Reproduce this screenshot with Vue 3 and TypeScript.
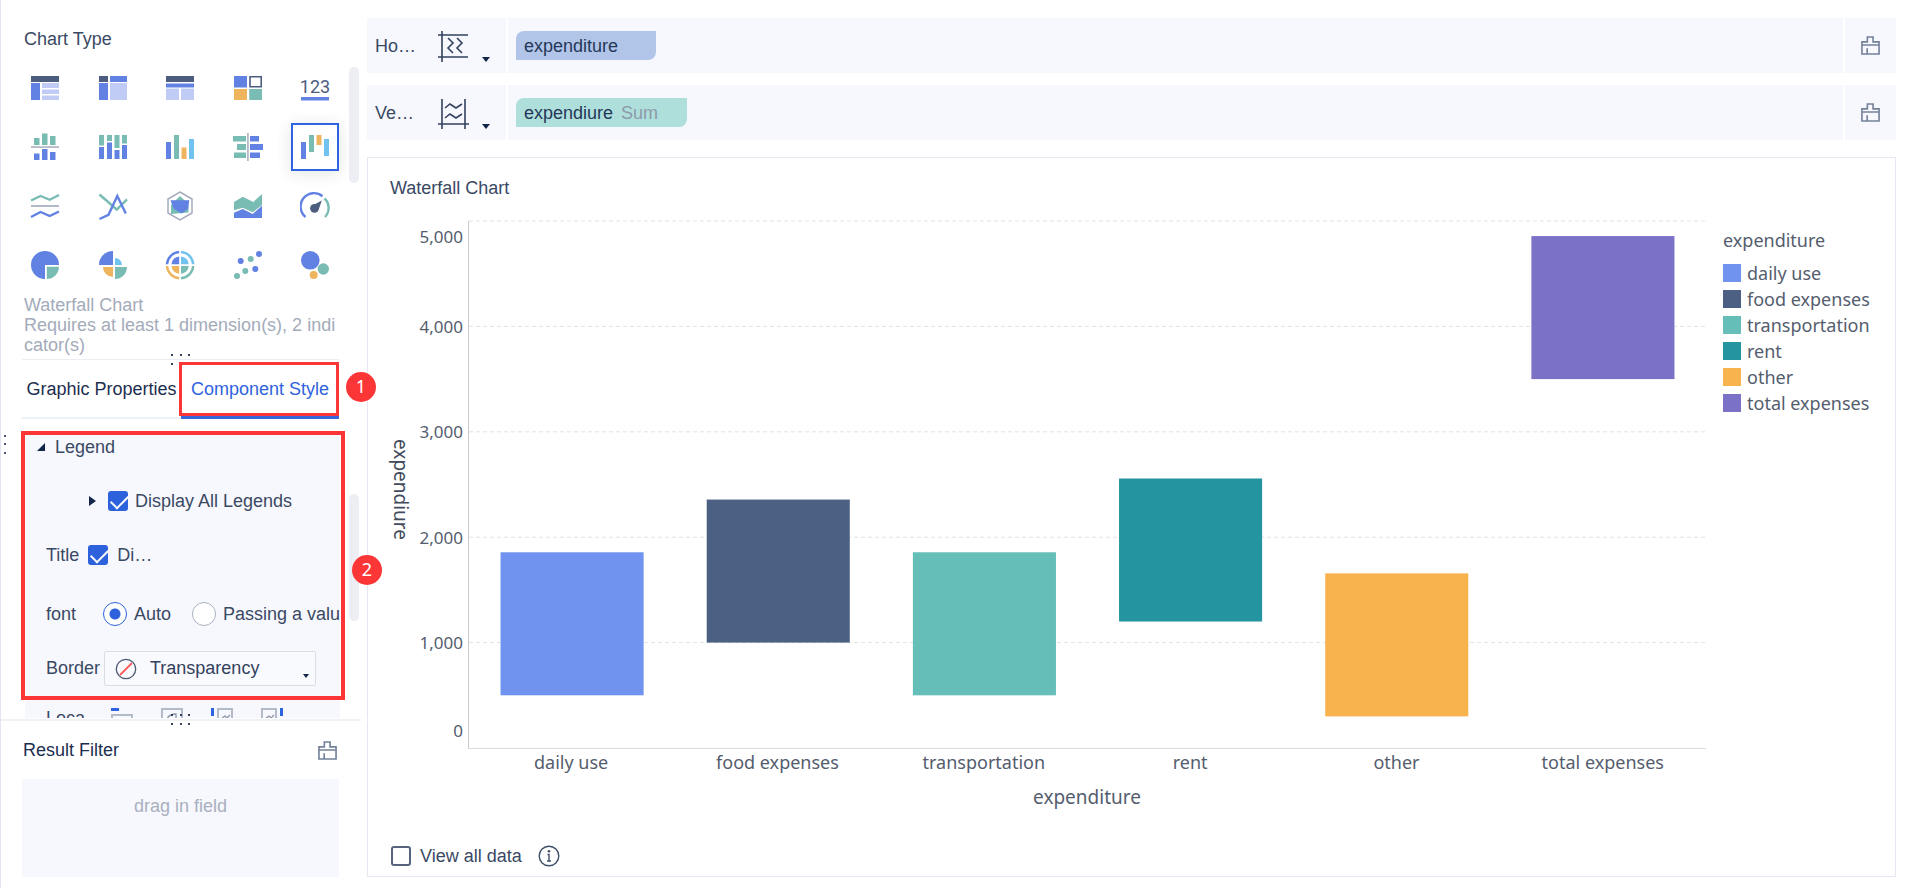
<script setup lang="ts">
import { ref } from 'vue'

interface Entry {
  name: string
  low: number
  high: number
  color: string
}

const axisMax = 5000
const ticks: string[] = ['5,000', '4,000', '3,000', '2,000', '1,000', '0']

const entries: Entry[] = [
  { name: 'daily use', low: 500, high: 1857, color: '#6f93ee' },
  { name: 'food expenses', low: 1000, high: 2357, color: '#4c6084' },
  { name: 'transportation', low: 500, high: 1857, color: '#65beb7' },
  { name: 'rent', low: 1200, high: 2557, color: '#2494a1' },
  { name: 'other', low: 300, high: 1657, color: '#f9b34e' },
  { name: 'total expenses', low: 3500, high: 4857, color: '#7b72c8' },
]

const slot = 100 / entries.length
const barShare = 0.694

const barX = (i: number): string => `${(i + (1 - barShare) / 2) * slot}%`
const barWidth = `${slot * barShare}%`
const barY = (e: Entry): string => `${100 - (e.high / axisMax) * 100}%`
const barHeight = (e: Entry): string => `${((e.high - e.low) / axisMax) * 100}%`

const chartTypes: string[] = [
  'Grouped table', 'Cross table', 'Detail table', 'Color table', 'KPI card',
  'Contrast column', 'Partition column', 'Column', 'Bidirectional bar', 'Waterfall',
  'Multi line', 'Range line', 'Radar', 'Area', 'Gauge',
  'Pie', 'Rose', 'Multi-layer pie', 'Scatter', 'Bubble',
]
const selectedType = ref(9)

const displayLegends = ref(true)
const displayTitle = ref(true)
const fontMode = ref('auto')
const viewAll = ref(false)
</script>

<template>
  <div class="page">
    <aside class="side">
      <section class="types">
        <h2 class="heading">Chart Type</h2>
        <div class="type-grid">
          <button
            v-for="(t, i) in chartTypes"
            :key="t"
            type="button"
            class="type"
            :class="{ selected: selectedType === i }"
            :aria-label="t"
            @click="selectedType = i"
          >
            <svg width="30" height="30" viewBox="0 0 30 30">
              <template v-if="i === 0">
                <path class="f-dark" d="M1 3h28v6H1z" />
                <path class="f-blue" d="M1 10h9v17H1z" />
                <path class="f-pale" d="M12 10h17v5H12zM12 16.500h17v4.500H12zM12 22.500h17V27H12z" />
              </template>
              <template v-else-if="i === 1">
                <path class="f-dark" d="M1 3h9v6H1z" />
                <path class="f-blue" d="M12 3h17v6H12zM1 10h9v17H1z" />
                <path class="f-pale" d="M12 10h17v17H12z" />
              </template>
              <template v-else-if="i === 2">
                <path class="f-dark" d="M1 3h28v6H1z" />
                <path class="f-blue" d="M1 10.500h28v4H1z" />
                <path class="f-pale" d="M1 15.500h13V27H1zM16 15.500h13V27H16z" />
              </template>
              <template v-else-if="i === 3">
                <path class="f-blue" d="M1 3h13v11.500H1z" />
                <path class="s-dark" stroke-width="1.600" d="M17 3.800h11.200v10H17z" />
                <path class="f-orange" d="M1 16h13v11H1z" />
                <path class="f-green" d="M16.200 16H29v11H16.200z" />
              </template>
              <template v-else-if="i === 4">
                <text class="digits" x="15" y="20" text-anchor="middle">123</text>
                <path class="f-blue" d="M1 24h28v3.500H1z" />
              </template>
              <template v-else-if="i === 5">
                <path class="f-gray" d="M1 14.200h28v1.800H1z" />
                <path class="f-green" d="M4 6h5.500v7H4zM12 1.500h5.500V13H12zM20 4h5.500v9H20z" />
                <path class="f-blue" d="M4 21.500h5.500V28H4zM12 17h5.500v11H12zM20 20h5.500v8H20z" />
              </template>
              <template v-else-if="i === 6">
                <path class="f-green" d="M1 3h5v10.500H1zM9 3h5v6H9zM16.500 3h5v13h-5zM24 3h5v8.500h-5z" />
                <path class="f-blue" d="M1 15h5v12H1zM9 10.500h5V27H9zM16.500 18h5v9h-5zM24 13h5v14h-5z" />
              </template>
              <template v-else-if="i === 7">
                <path class="f-blue" d="M1 10h5v17H1z" />
                <path class="f-green" d="M9 3h5v24H9z" />
                <path class="f-orange" d="M16.500 15.500h5V27h-5z" />
                <path class="f-sky" d="M24 7h5v20h-5z" />
              </template>
              <template v-else-if="i === 8">
                <path class="f-green" d="M0 4h13v5.500H0zM4 12h9v6H4zM1 20.500h12V26H1z" />
                <path class="f-blue" d="M17 4h9v5.500h-9zM17 12h13v6H17zM17 20.500h10V26H17z" />
                <path class="f-gray" d="M14 1h1.800v28H14z" />
              </template>
              <template v-else-if="i === 9">
                <path class="f-blue" d="M1 10h5v17H1z" />
                <path class="f-green" d="M9 3h5v17H9z" />
                <path class="f-orange" d="M16.500 3h5v10h-5z" />
                <path class="f-sky" d="M24 7h5v17h-5z" />
              </template>
              <template v-else-if="i === 10">
                <path class="s-green" d="M1 9.500l9.500-4.500 9.200 3.800L29 4" />
                <path class="f-gray" d="M1 14h28v2H1z" />
                <path class="s-blue" d="M1 26l9.500-5 9.200 4L29 20.500" />
              </template>
              <template v-else-if="i === 11">
                <path class="s-green" d="M1.500 3.500l17.200 15L29 8.300" />
                <path class="s-blue" d="M1.500 28l9-4.200L19.300 5l8.500 17.500" />
              </template>
              <template v-else-if="i === 12">
                <path class="s-gray" d="M15 1l12 7v14l-12 7-12-7V8z" />
                <path class="f-green" d="M15 5l8.500 8v8.500L6 23V14z" />
                <path class="f-blue" d="M5.500 9.200h18.800L23 18l-6.500 4.500-8-5z" />
              </template>
              <template v-else-if="i === 13">
                <path class="f-green" d="M1 11l8.700-5.300L20.300 11 29 3v11l-9.300 7.300-10-4.600L1 19.300z" />
                <path class="f-blue" d="M1 21.700L9.700 18l10 5L29 14.700V27H1z" />
              </template>
              <template v-else-if="i === 14">
                <path class="s-blue" d="M5.500 26A13 13 0 0 1 22.500 5.200" />
                <path class="s-green" d="M24.500 7.500A13 13 0 0 1 25 26" />
                <circle class="f-dark" cx="14.500" cy="17.300" r="4.400" />
                <path class="f-dark" d="M21.800 9.500l-3.200 9.300-6-4.200z" />
              </template>
              <template v-else-if="i === 15">
                <path class="f-blue" d="M15 15V29A14 14 0 1 1 29 15z" />
                <path class="f-green" d="M16.800 16.800H29A12.300 12.300 0 0 1 16.800 29z" />
              </template>
              <template v-else-if="i === 16">
                <path class="f-blue" d="M15 15H1A14 14 0 0 1 15 1z" />
                <path class="f-sky" d="M17 15V8a7 7 0 0 1 7 7z" />
                <path class="f-orange" d="M15 17v10a10 10 0 0 1-10-10z" />
                <path class="f-green" d="M17 17h12a12 12 0 0 1-12 12z" />
              </template>
              <template v-else-if="i === 17">
                <path class="f-blue" d="M14.200 14.200H6.500a8 8 0 0 1 7.700-7.700z" />
                <path class="f-sky" d="M16 14.200V6.500a8 8 0 0 1 7.700 7.700z" />
                <path class="f-orange" d="M14.200 16v7.700A8 8 0 0 1 6.500 16z" />
                <path class="f-green" d="M16 16h7.700a8 8 0 0 1-7.700 7.700z" />
                <path class="s-blue" d="M2 14.200A13 13 0 0 1 14.200 2" />
                <path class="s-sky" d="M16 2a13 13 0 0 1 12.200 12.200" />
                <path class="s-orange" d="M2 16a13 13 0 0 0 12.200 12.200" />
                <path class="s-green" d="M28.200 16A13 13 0 0 1 16 28.200" />
              </template>
              <template v-else-if="i === 18">
                <g class="f-blue">
                  <circle cx="26" cy="4" r="3" /><circle cx="7.700" cy="11" r="3" /><circle cx="22.300" cy="19" r="3" />
                </g>
                <g class="f-green">
                  <circle cx="17.700" cy="9" r="3" /><circle cx="12.300" cy="21" r="3" /><circle cx="4" cy="26" r="3" />
                </g>
              </template>
              <template v-else>
                <circle class="f-blue" cx="10.300" cy="10.300" r="9.300" />
                <circle class="f-green" cx="23.300" cy="19" r="5.700" />
                <circle class="f-orange" cx="13.700" cy="25" r="4" />
              </template>
            </svg>
          </button>
        </div>
        <p class="hint">Waterfall Chart<br />Requires at least 1 dimension(s), 2 indicator(s)</p>
        <span class="thumb thumb-types"></span>
      </section>

      <nav class="tabs">
        <svg class="grip" width="20" height="12" viewBox="0 0 20 12">
          <path d="M0 0h2v2H0zM9 0h2v2H9zM17 0h2v2h-2zM0 9h2v2H0z" />
        </svg>
        <button type="button" class="tab">Graphic Properties</button>
        <button type="button" class="tab active">Component Style</button>
        <span class="mark mark-tab"></span>
        <span class="badge badge-one">1</span>
      </nav>

      <section class="style-wrap">
        <div class="style-pane">
          <div class="row group">
            <svg width="9" height="9" viewBox="0 0 9 9"><path class="f-ink" d="M8 0v8H0z" /></svg>
            <span>Legend</span>
          </div>
          <div class="row all">
            <svg width="7" height="12" viewBox="0 0 7 12"><path class="f-ink" d="M0 1l7 5-7 5z" /></svg>
            <label class="choice"><input v-model="displayLegends" type="checkbox" class="check" />Display All Legends</label>
          </div>
          <div class="row title-row">
            <span>Title</span>
            <label class="choice wide"><input v-model="displayTitle" type="checkbox" class="check" />Di…</label>
          </div>
          <div class="row font-row">
            <span class="key">font</span>
            <label class="choice"><input v-model="fontMode" type="radio" name="font" value="auto" class="radio" />Auto</label>
            <label class="choice"><input v-model="fontMode" type="radio" name="font" value="value" class="radio" />Passing a value</label>
          </div>
          <div class="row border-row">
            <label class="key" for="border">Border</label>
            <span class="select-box">
              <svg class="none-icon" width="22" height="22" viewBox="0 0 22 22">
                <path d="M5 17L17 5" stroke="#fb5a57" stroke-width="1.800" />
                <circle cx="11" cy="11" r="9.700" fill="none" stroke="#4b5973" stroke-width="1.300" />
              </svg>
              <select id="border">
                <option>Transparency</option>
              </select>
              <svg class="select-caret" width="6" height="4" viewBox="0 0 6 4"><path class="f-ink" d="M0 0h6L3 4z" /></svg>
            </span>
          </div>
          <div class="row loca-row">
            <span class="key">Loca</span>
            <svg width="22" height="22" viewBox="0 0 22 22">
              <path class="f-royal" d="M0 0h8v3H0z" /><path class="s-box" d="M1 21V7h20v14M10 13l2-2h6" />
            </svg>
            <svg width="22" height="22" viewBox="0 0 22 22">
              <path class="s-box" d="M1 21V1h20v20z" /><path class="s-mini" d="M6 11q2-5 9-5v6" />
            </svg>
            <svg width="22" height="22" viewBox="0 0 22 22">
              <path class="f-royal" d="M0 0h3v8H0z" /><path class="s-box" d="M7 21V1h14v20z" /><path class="s-mini" d="M11 10l3-2 2 2 3-3" />
            </svg>
            <svg width="22" height="22" viewBox="0 0 22 22">
              <path class="s-box" d="M1 21V1h14v20z" /><path class="s-mini" d="M5 10l3-2 2 2 3-3" /><path class="f-royal" d="M19 0h3v8h-3z" />
            </svg>
          </div>
        </div>
        <span class="thumb thumb-style"></span>
        <span class="mark mark-style"></span>
        <span class="badge badge-two">2</span>
        <svg class="side-grip" width="2" height="19" viewBox="0 0 2 19"><path d="M0 0h2v2H0zM0 8h2v2H0zM0 17h2v2H0z" /></svg>
      </section>

      <section class="filter">
        <svg class="grip" width="20" height="12" viewBox="0 0 20 12">
          <path d="M0 0h2v2H0zM9 0h2v2H9zM17 0h2v2h-2zM0 9h2v2H0zM9 9h2v2H9zM17 9h2v2h-2z" />
        </svg>
        <div class="filter-head">
          <h2 class="heading">Result Filter</h2>
          <button type="button" aria-label="Clear filter">
            <svg class="brush" width="19" height="19" viewBox="0 0 20 20">
              <path d="M1 6.200h5.700V1h6v5.200H19V19H1zM1 9.500h18M6.500 19v-6" />
            </svg>
          </button>
        </div>
        <div class="drop">drag in field</div>
      </section>
    </aside>

    <main class="main">
      <section class="shelf">
        <div class="shelf-name">
          <span class="axis">Ho…</span>
          <button type="button" class="axis-button" aria-label="Horizontal axis">
            <svg width="31" height="32" viewBox="0 0 31 32">
              <path d="M4 1v31M0 5h30M0 27h30M10 8l5 5-5 5 5 5M19 8l5 5-5 5 5 5" />
            </svg>
            <svg class="caret" width="8" height="5" viewBox="0 0 8 5"><path class="f-ink" d="M0 0h8L4 5z" /></svg>
          </button>
        </div>
        <div class="shelf-fields"><span class="pill dimension">expenditure</span></div>
        <button type="button" class="shelf-clear" aria-label="Clear horizontal axis">
          <svg class="brush" width="19" height="19" viewBox="0 0 20 20">
            <path d="M1 6.200h5.700V1h6v5.200H19V19H1zM1 9.500h18M6.500 19v-6" />
          </svg>
        </button>
      </section>
      <section class="shelf">
        <div class="shelf-name">
          <span class="axis">Ve…</span>
          <button type="button" class="axis-button" aria-label="Vertical axis">
            <svg width="31" height="32" viewBox="0 0 31 32">
              <path d="M4 2v30M27 2v30M0 27h31M7 11l5-4 6 4 6-4M7 21l5-4 6 4 6-4" />
            </svg>
            <svg class="caret" width="8" height="5" viewBox="0 0 8 5"><path class="f-ink" d="M0 0h8L4 5z" /></svg>
          </button>
        </div>
        <div class="shelf-fields"><span class="pill measure">expendiure<em>Sum</em></span></div>
        <button type="button" class="shelf-clear" aria-label="Clear vertical axis">
          <svg class="brush" width="19" height="19" viewBox="0 0 20 20">
            <path d="M1 6.200h5.700V1h6v5.200H19V19H1zM1 9.500h18M6.500 19v-6" />
          </svg>
        </button>
      </section>

      <section class="card">
        <h1 class="card-title">Waterfall Chart</h1>
        <div class="chart">
          <div class="y-title">expendiure</div>
          <div class="y-ticks"><span v-for="t in ticks" :key="t">{{ t }}</span></div>
          <div class="plot">
            <svg width="100%" height="100%">
              <line v-for="n in 5" :key="n" class="grid" x1="0" x2="100%" :y1="`${(n - 1) * 20}%`" :y2="`${(n - 1) * 20}%`" />
              <rect
                v-for="(e, i) in entries"
                :key="e.name"
                :x="barX(i)"
                :y="barY(e)"
                :width="barWidth"
                :height="barHeight(e)"
                :fill="e.color"
              />
            </svg>
          </div>
          <div class="x-ticks"><span v-for="e in entries" :key="e.name">{{ e.name }}</span></div>
          <div class="x-title">expenditure</div>
          <div class="legend">
            <div>expenditure</div>
            <ul>
              <li v-for="e in entries" :key="e.name">
                <i :style="{ background: e.color }"></i>{{ e.name }}
              </li>
            </ul>
          </div>
        </div>
        <footer class="card-foot">
          <label class="choice"><input v-model="viewAll" type="checkbox" class="check" />View all data</label>
          <svg width="22" height="22" viewBox="0 0 22 22">
            <circle cx="11" cy="11" r="9.800" fill="none" stroke="#3f4e69" stroke-width="1.400" />
            <circle cx="11" cy="6.300" r="1.300" fill="#3f4e69" />
            <path d="M9.500 9.500H11V16M9 16h4" fill="none" stroke="#3f4e69" stroke-width="1.400" />
          </svg>
        </footer>
      </section>
    </main>
  </div>
</template>

<style>
body {
  margin: 0;
  background: #fff;
}
</style>

<style scoped>
.page {
  display: flex;
  min-height: 100vh;
  box-sizing: border-box;
  font: 18px/20px "Liberation Sans", Arial, sans-serif;
  color: #3a4964;
}
.page * {
  box-sizing: border-box;
}
button {
  padding: 0;
  border: 0;
  background: none;
  font: inherit;
  color: inherit;
  cursor: pointer;
}
svg {
  display: block;
  flex: none;
}
.side {
  display: flex;
  flex-direction: column;
  flex: none;
  width: 367px;
  border-left: 1px solid #e2e5f0;
}
.heading,
.card-title {
  margin: 0;
  font-size: 18px;
  font-weight: 400;
}

/* chart type picker */
.types {
  position: relative;
  padding: 29px 28px 4px 20px;
}
.types .heading {
  padding-left: 3px;
}
.type-grid {
  display: grid;
  grid-template-columns: repeat(5, 48px);
  justify-content: space-between;
  row-gap: 11px;
  margin-top: 15px;
}
.type {
  display: grid;
  place-items: center;
  height: 48px;
}
.type.selected {
  border: 2px solid #2f63df;
  background: #fff;
  box-shadow: 0 2px 16px rgba(20, 30, 60, 0.12);
}
.f-dark { fill: #4c5d80; }
.f-blue { fill: #6181e3; }
.f-pale { fill: #c0ccf5; }
.f-orange { fill: #eeb45e; }
.f-green { fill: #79bcb3; }
.f-sky { fill: #71c3ef; }
.f-gray { fill: #b3b9c7; }
.f-ink { fill: #12264a; }
.f-royal { fill: #2f63df; }
.s-dark, .s-blue, .s-green, .s-sky, .s-orange, .s-gray, .s-box, .s-mini { fill: none; }
.s-dark { stroke: #4c5d80; }
.s-blue { stroke: #6181e3; stroke-width: 2.4; }
.s-green { stroke: #79bcb3; stroke-width: 2.4; }
.s-sky { stroke: #71c3ef; stroke-width: 2.4; }
.s-orange { stroke: #eeb45e; stroke-width: 2.4; }
.s-gray { stroke: #a4acbc; stroke-width: 1.5; }
.s-box { stroke: #b3bac8; stroke-width: 2; }
.s-mini { stroke: #8d97a9; stroke-width: 1.3; }
.digits {
  font: 18px Roboto, sans-serif;
  fill: #4c5d80;
}
.hint {
  margin: 6px 0 0 3px;
  word-break: break-all;
  color: #a3abba;
}
.thumb {
  position: absolute;
  right: 8px;
  width: 10px;
  border-radius: 5px;
  background: #edeef3;
}
.thumb-types {
  top: 67px;
  height: 116px;
}
.thumb-style {
  top: 62px;
  height: 127px;
}

/* tabs */
.tabs {
  position: relative;
  display: flex;
  height: 60px;
  margin: 0 28px 0 21px;
  border-top: 1px solid #eceef3;
  border-bottom: 2px solid #ecf1f6;
}
.tab {
  width: 159px;
  margin-bottom: -2px;
  padding-bottom: 1px;
  white-space: nowrap;
  color: #1c2e50;
}
.tab.active {
  flex: 1;
  padding-bottom: 0;
  border-top: 2px solid transparent;
  border-bottom: 3px solid #3766dc;
  color: #3063dd;
}
.grip {
  position: absolute;
  top: -6px;
  left: 149px;
  fill: #33435f;
}
.mark {
  position: absolute;
  border: 3px solid #fc3636;
  pointer-events: none;
}
.mark-tab {
  inset: 2px 0 1px 157px;
}
.badge {
  position: absolute;
  width: 30px;
  height: 30px;
  border-radius: 50%;
  background: #fc3636;
  color: #fff;
  font: 18px/28px "Noto Sans", sans-serif;
  text-align: center;
}
.badge-one {
  top: 12px;
  right: -37px;
}

/* style settings */
.style-wrap {
  position: relative;
  display: flex;
  flex: 1 1 0;
  min-height: 286px;
  margin-top: 13px;
}
.style-pane {
  flex: 1 1 0;
  height: 286px;
  min-width: 0;
  margin: 0 27px 0 24px;
  overflow: hidden;
  background: #f7f8fd;
  white-space: nowrap;
}
.row {
  display: flex;
  align-items: center;
  padding-left: 21px;
}
.key,
.choice {
  flex: none;
}
.group {
  height: 30px;
  padding-left: 12px;
  gap: 9px;
}
.all {
  height: 78px;
  gap: 12px;
  padding-left: 64px;
}
.title-row {
  height: 30px;
  gap: 9px;
}
.font-row {
  height: 87px;
  gap: 21px;
}
.font-row .key {
  width: 36px;
}
.border-row {
  height: 22px;
}
.border-row .key {
  width: 58px;
}
.loca-row {
  align-items: flex-start;
  gap: 28px;
  padding-top: 29px;
}
.loca-row .key {
  width: 37px;
}
.choice {
  display: flex;
  align-items: center;
  gap: 7px;
}
.choice.wide {
  gap: 9px;
}
.check,
.radio {
  flex: none;
  appearance: none;
  margin: 0;
  background: #fff;
}
.check {
  width: 20px;
  height: 20px;
  border: 2px solid #57647c;
  border-radius: 3px;
}
.check:checked {
  border: 0;
  background: #2d62dc;
}
.check:checked::before {
  content: "";
  display: block;
  width: 15px;
  height: 8px;
  margin: 4px 0 0 3px;
  border: solid #fff;
  border-width: 0 0 2px 2px;
  transform: rotate(-45deg);
}
.radio {
  width: 24px;
  height: 24px;
  border: 1px solid #a8b0bf;
  border-radius: 50%;
}
.radio:checked {
  border-color: #2d62dc;
  background: radial-gradient(circle, #2d62dc 5px, #fff 6px);
}
.select-box {
  position: relative;
  display: block;
  width: 212px;
}
select {
  display: block;
  width: 100%;
  height: 35px;
  padding: 0 24px 0 45px;
  appearance: none;
  border: 1px solid #d9dde5;
  border-radius: 2px;
  background: #f9fafd;
  font: inherit;
  color: #33425e;
}
.none-icon {
  position: absolute;
  top: 7px;
  left: 11px;
}
.select-caret {
  position: absolute;
  right: 7px;
  bottom: 8px;
}
.mark-style {
  inset: -1px 22px 19px 20px;
  border-width: 4px;
}
.badge-two {
  top: 123px;
  right: -15px;
}
.side-grip {
  position: absolute;
  top: 3px;
  left: 3px;
  fill: #4a5872;
}

/* result filter */
.filter {
  position: relative;
  margin-right: 6px;
  padding: 19px 22px 11px 21px;
  border-top: 2px solid #eff1f6;
}
.filter .grip {
  top: -7px;
  left: 170px;
}
.filter-head {
  display: flex;
  align-items: center;
  justify-content: space-between;
  padding: 0 2px 0 1px;
  color: #1c2e50;
}
.drop {
  height: 98px;
  margin-top: 19px;
  padding-top: 17px;
  background: #f7f8fd;
  color: #a9b0bf;
  text-align: center;
}
.brush {
  fill: none;
  stroke: #74819a;
  stroke-width: 1.7;
}

/* shelves */
.main {
  display: flex;
  flex: 1;
  flex-direction: column;
  min-width: 0;
  padding: 18px 24px 11px 0;
}
.shelf {
  display: flex;
  gap: 2px;
  height: 55px;
  margin-bottom: 12px;
}
.shelf > * {
  background: #f7f8fd;
}
.shelf-name {
  display: flex;
  align-items: center;
  width: 139px;
  padding-left: 8px;
}
.axis {
  width: 63px;
}
.axis-button {
  display: flex;
  align-items: flex-end;
  gap: 13px;
  fill: none;
  stroke: #33425e;
  stroke-width: 1.6;
}
.caret {
  stroke: none;
}
.shelf-fields {
  flex: 1;
  padding: 13px 8px;
}
.pill {
  display: inline-flex;
  align-items: center;
  height: 29px;
  padding: 0 8px;
  border-radius: 8px 0;
  color: #253758;
}
.dimension {
  min-width: 140px;
  background: #b1c5e9;
}
.measure {
  min-width: 171px;
  gap: 8px;
  background: #aedfdb;
}
.pill em {
  font-style: normal;
  color: #8d9aaa;
}
.shelf-clear {
  display: grid;
  place-items: center;
  width: 51px;
}

/* chart */
.card {
  display: flex;
  flex: 1;
  flex-direction: column;
  margin-top: 5px;
  padding: 20px 21px 9px;
  border: 1px solid #e6e9f2;
}
.card-title {
  padding-left: 1px;
}
.chart {
  display: grid;
  flex: 1;
  grid-template-columns: 28px 51px minmax(0, 1fr) 168px;
  grid-template-rows: minmax(300px, 1fr) 28px 42px;
  margin-top: 23px;
  font: 18px/24px "Noto Sans", "Open Sans", sans-serif;
  color: #545d6e;
}
.y-title {
  writing-mode: vertical-rl;
  justify-self: start;
  align-self: center;
  padding-top: 10px;
  font-size: 19px;
  color: #424b5d;
}
.y-ticks {
  display: grid;
  grid-template-rows: 1fr 2fr 2fr 2fr 2fr 1fr;
  padding-right: 5px;
  font-size: 17px;
}
.y-ticks span {
  display: flex;
  align-items: center;
  justify-content: flex-end;
}
.y-ticks span:first-child {
  align-items: flex-start;
  padding-top: 4px;
}
.y-ticks span:last-child {
  align-items: flex-end;
  padding-bottom: 6px;
}
.plot {
  position: relative;
  border-left: 1px solid #c8cacd;
  border-bottom: 1px solid #dadce0;
}
.plot svg {
  position: absolute;
  inset: 0;
  overflow: visible;
}
.grid {
  stroke: #e2e2e5;
  stroke-width: 1;
  stroke-dasharray: 4 3;
}
.x-ticks {
  display: flex;
  grid-column: 3;
  padding-top: 1px;
  text-align: center;
}
.x-ticks span {
  flex: 1 1 0;
}
.x-title {
  grid-column: 3;
  padding-top: 8px;
  font-size: 19px;
  text-align: center;
}
.legend {
  grid-column: 4;
  grid-row: 1;
  padding: 7px 0 0 17px;
  white-space: nowrap;
}
.legend ul {
  margin: 8px 0 0;
  padding: 0;
  list-style: none;
}
.legend li {
  display: flex;
  align-items: center;
  gap: 6px;
  height: 26px;
}
.legend i {
  width: 18px;
  height: 18px;
}
.card-foot {
  display: flex;
  align-items: center;
  gap: 16px;
  height: 22px;
  margin-top: 26px;
  padding-left: 2px;
}
.card-foot .choice {
  gap: 9px;
}
</style>
